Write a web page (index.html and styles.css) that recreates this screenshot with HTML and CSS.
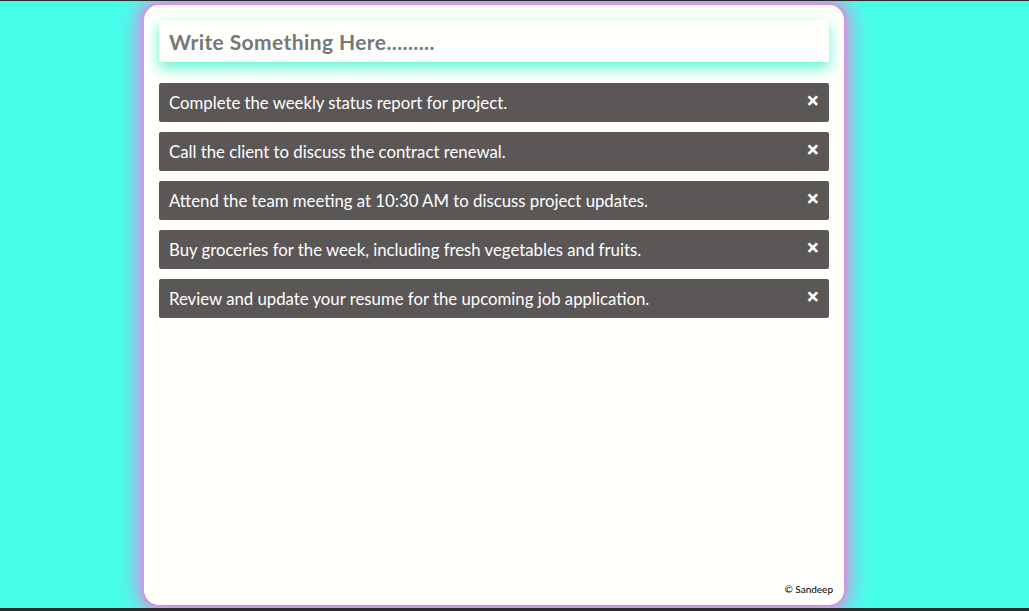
FILE: index.html
```html
<!DOCTYPE html>
<html>
<head>
<meta charset="utf-8">
<link rel="stylesheet" href="styles.css">
</head>
<body>
<div class="frame">
  <div class="card">
    <input class="entry" type="text" placeholder="Write Something Here.........">
    <ul class="list">
      <li class="item"><span>Complete the weekly status report for project.</span><span class="close">&#10005;</span></li>
      <li class="item"><span>Call the client to discuss the contract renewal.</span><span class="close">&#10005;</span></li>
      <li class="item"><span>Attend the team meeting at 10:30 AM to discuss project updates.</span><span class="close">&#10005;</span></li>
      <li class="item"><span>Buy groceries for the week, including fresh vegetables and fruits.</span><span class="close">&#10005;</span></li>
      <li class="item"><span>Review and update your resume for the upcoming job application.</span><span class="close">&#10005;</span></li>
    </ul>
    <div class="footer">&copy; Sandeep</div>
  </div>
</div>
</body>
</html>
```
FILE: styles.css
```css
html, body {
  margin: 0;
  padding: 0;
  height: 100%;
}
body {
  background: #45ffea;
  border-top: 1px solid #2a2a2a;
  border-bottom: 3px solid #2a2a2a;
  box-sizing: border-box;
  font-family: "Lato", "Open Sans", sans-serif;
  overflow: hidden;
}
.frame {
  padding-top: 4px;
  padding-left: 144px;
}
.card {
  width: 700px;
  height: 600px;
  box-sizing: border-box;
  background: #fffffc;
  border-radius: 15px;
  box-shadow: 0 0 3px 2px #da90e0, 0 0 20px 7px #da90e0;
  padding: 15px;
  display: flex;
  flex-direction: column;
}
.entry {
  height: 42px;
  box-sizing: border-box;
  border: none;
  outline: none;
  background: #fffffc;
  box-shadow: 0 6px 14px #5ff4d0;
  padding: 0 10px;
  font-family: inherit;
  font-size: 21px;
  font-weight: bold;
  letter-spacing: 0.4px;
  color: #777;
}
.entry::placeholder {
  color: #777;
}
.list {
  list-style: none;
  margin: 21px 0 0;
  padding: 0;
  display: flex;
  flex-direction: column;
  gap: 10px;
}
.item {
  height: 39px;
  background: #5b5757;
  border-radius: 2px;
  color: #fff;
  font-size: 16.75px;
  padding: 0 10px;
  display: flex;
  align-items: center;
  justify-content: space-between;
}
.close {
  font-family: "DejaVu Sans", sans-serif;
  font-size: 15px;
  font-weight: bold;
  -webkit-text-stroke: 1px #fff;
  margin-top: -4px;
  margin-right: 0;
}
.footer {
  margin-top: auto;
  align-self: flex-end;
  font-size: 10px;
  color: #000;
  margin-right: -4px;
  margin-bottom: -5px;
}
```
